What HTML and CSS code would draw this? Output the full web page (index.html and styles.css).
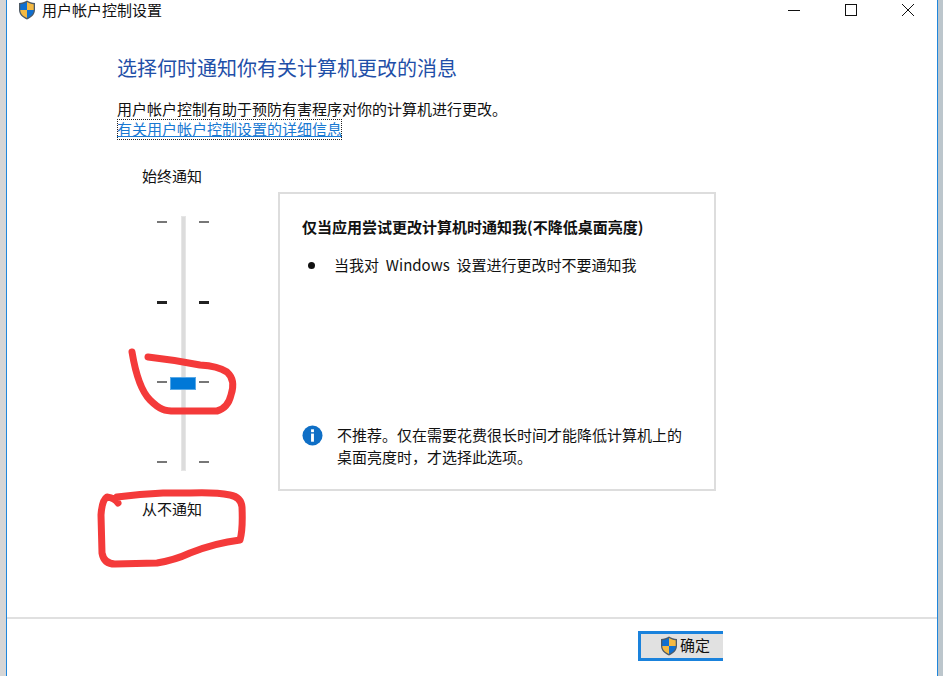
FILE: index.html
```html
<!DOCTYPE html>
<html lang="zh-CN">
<head>
<meta charset="utf-8">
<title>用户帐户控制设置</title>
<link rel="stylesheet" href="styles.css">
</head>
<body>
<div class="strip-left"></div>
<div class="window">
  <header class="titlebar">
    <svg class="shield" viewBox="0 0 18 20"><path d="M9 0.5 C6.5 2 4 2.8 1 3 V10 C1 14.5 4.5 17.5 9 19.5 C13.5 17.5 17 14.5 17 10 V3 C14 2.8 11.5 2 9 0.5Z" fill="#4d5a66"/><path d="M9 2 V10 H2.3 V4.2 C4.8 4 7 3.2 9 2Z" fill="#0f6fd0"/><path d="M9 2 C11 3.2 13.2 4 15.7 4.2 V10 H9Z" fill="#f4b942"/><path d="M2.3 10 H9 V18 C5 16.2 2.3 13.6 2.3 10Z" fill="#f4b942"/><path d="M9 10 H15.7 C15.7 13.6 13 16.2 9 18Z" fill="#0f6fd0"/></svg>
    <span class="title">用户帐户控制设置</span>
    <div class="controls">
      <svg class="ctl" viewBox="0 0 14 14"><path d="M1 7.5 H13" stroke="#111" fill="none"/></svg>
      <svg class="ctl" viewBox="0 0 14 14"><rect x="1.5" y="1.5" width="11" height="11" stroke="#111" fill="none"/></svg>
      <svg class="ctl" viewBox="0 0 14 14"><path d="M1 1 L13 13 M13 1 L1 13" stroke="#111" fill="none"/></svg>
    </div>
  </header>

  <main class="content">
    <h1 class="heading">选择何时通知你有关计算机更改的消息</h1>
    <p class="desc">用户帐户控制有助于预防有害程序对你的计算机进行更改。</p>
    <a class="link" href="#">有关用户帐户控制设置的详细信息</a>

    <div class="columns">
      <div class="slider-col">
        <div class="slider-label">始终通知</div>
        <div class="slider">
          <div class="ticks">
            <span class="tick"></span><span class="tick dark"></span><span class="tick"></span><span class="tick"></span>
          </div>
          <div class="track"><span class="thumb"></span></div>
          <div class="ticks">
            <span class="tick"></span><span class="tick dark"></span><span class="tick"></span><span class="tick"></span>
          </div>
        </div>
        <div class="slider-label bottom">从不通知</div>
      </div>

      <section class="panel">
        <h2 class="panel-title">仅当应用尝试更改计算机时通知我(不降低桌面亮度)</h2>
        <ul class="panel-list">
          <li><span class="item-text">当我对 Windows 设置进行更改时不要通知我</span></li>
        </ul>
        <div class="note">
          <svg class="info" viewBox="0 0 22 22"><circle cx="11" cy="11" r="10.5" fill="#0f6fc6"/><rect x="9.5" y="4.5" width="3" height="3" fill="#fff"/><rect x="9.5" y="9" width="3" height="8.5" fill="#fff"/></svg>
          <p>不推荐。仅在需要花费很长时间才能降低计算机上的桌面亮度时，才选择此选项。</p>
        </div>
      </section>
    </div>
  </main>

  <footer class="footer">
    <button class="ok" type="button">
      <svg class="shield small" viewBox="0 0 18 20"><path d="M9 0.5 C6.5 2 4 2.8 1 3 V10 C1 14.5 4.5 17.5 9 19.5 C13.5 17.5 17 14.5 17 10 V3 C14 2.8 11.5 2 9 0.5Z" fill="#4d5a66"/><path d="M9 2 V10 H2.3 V4.2 C4.8 4 7 3.2 9 2Z" fill="#0f6fd0"/><path d="M9 2 C11 3.2 13.2 4 15.7 4.2 V10 H9Z" fill="#f4b942"/><path d="M2.3 10 H9 V18 C5 16.2 2.3 13.6 2.3 10Z" fill="#f4b942"/><path d="M9 10 H15.7 C15.7 13.6 13 16.2 9 18Z" fill="#0f6fd0"/></svg>
      <span class="ok-text">确定</span>
    </button>
  </footer>
</div>
<div class="strip-right"></div>

<svg class="scribble" viewBox="0 0 943 676">
  <path d="M132 352 C135 370 140 390 150 400 S165 411 175 411 L217 411 Q228 408 231 395 Q236 380 227 372 Q218 366 200 365 Q175 360 148 357"/>
  <path d="M118 503 Q115 498 107 497 Q102 500 101 515 L102 553 Q104 564 115 564 L157 563 Q175 560 190 553 Q215 543 240 540 Q243 530 242 507 Q241 497 230 495 Q215 492 190 493 L163 493 Q140 494 117 497"/>
</svg>
</body>
</html>
```
FILE: styles.css
```css
* { box-sizing: border-box; }
html, body { height: 100%; }
body {
  margin: 0;
  display: flex;
  height: 676px;
  overflow: hidden;
  background: #fff;
  color: #111;
  font-family: "Noto Sans CJK SC", "Noto Sans", sans-serif;
  font-size: 15px;
}
.strip-left { width: 6px; background: #d6d6d6; }
.strip-right { width: 5px; background: #bcc6cc; }
.window {
  flex: 1;
  display: flex;
  flex-direction: column;
  background: #fff;
  border-left: 1px solid #1f86dc;
  border-right: 1px solid #1f86dc;
}
.titlebar {
  display: flex;
  align-items: center;
  height: 19px;
  padding-left: 11px;
}
.shield { width: 18px; height: 20px; flex: none; }
.title { margin-left: 6px; line-height: 19px; }
.controls {
  margin-left: auto;
  display: flex;
  gap: 43px;
  padding-right: 22px;
}
.ctl { width: 14px; height: 14px; display: block; }
.content { flex: 1; padding: 36px 0 0 110px; }
.heading {
  margin: 0;
  font-size: 20px;
  font-weight: 400;
  line-height: 26px;
  color: #1f4fa8;
}
.desc { margin: 17px 0 -2px; line-height: 22px; }
.link {
  display: inline-block;
  height: 21px;
  line-height: 20px;
  color: #1979d2;
  text-decoration: underline;
  outline: 1px dotted #222;
  outline-offset: -1px;
}
.columns { display: flex; margin-top: 26px; }
.slider-col {
  width: 131px;
  margin-right: 30px;
  display: flex;
  flex-direction: column;
  align-items: center;
}
.slider-label { line-height: 20px; margin-left: -21px; }
.slider-label.bottom { margin-top: 28px; }
.slider {
  display: flex;
  justify-content: center;
  gap: 13px;
  margin-top: 30px;
  height: 255px;
}
.ticks {
  width: 10px;
  display: flex;
  flex-direction: column;
  justify-content: space-between;
  padding: 5px 0 8px;
}
.tick { display: block; height: 2px; background: #777; }
.tick.dark { height: 3px; background: #222; }
.track {
  position: relative;
  width: 5px;
  margin-left: 1px;
  background: #dcdcdc;
  border: 1px solid #e6e6e6;
}
.thumb {
  position: absolute;
  left: -12px;
  top: 160px;
  width: 26px;
  height: 13px;
  background: #0078d7;
  border: 1px solid #5aa9e6;
}
.panel {
  width: 438px;
  height: 299px;
  margin-top: 26px;
  border: 2px solid #dddddd;
  padding: 22px 22px 0;
  display: flex;
  flex-direction: column;
}
.panel-title { margin: 0; font-size: 15px; font-weight: 700; line-height: 22px; white-space: nowrap; }
.panel-list {
  margin: 16px 0 0;
  padding: 0;
  line-height: 22px;
  list-style: none;
}
.panel-list li { display: flex; align-items: center; }
.panel-list li::before {
  content: "";
  width: 7px;
  height: 7px;
  margin: 0 19px 0 6px;
  border-radius: 50%;
  background: #111;
}
.item-text { word-spacing: 3.5px; }
.note { display: flex; gap: 14px; margin-top: 148px; }
.info { width: 21px; height: 21px; flex: none; margin-top: 1px; }
.note p { margin: 0; width: 350px; line-height: 22px; }
.footer {
  height: 59px;
  border-top: 2px solid #e0e0e0;
  padding: 12px 214px 0 0;
  display: flex;
  justify-content: flex-end;
}
.ok {
  display: flex;
  align-items: center;
  justify-content: flex-start;
  gap: 2px;
  width: 85px;
  height: 30px;
  padding: 0 0 0 19px;
  background: #e1e1e1;
  border: 3px solid #1a82dc;
  border-right: 0;
  color: #111;
  font: inherit;
}
.ok-text { margin-bottom: 3px; }
.shield.small { width: 18px; height: 20px; }
.scribble {
  position: absolute;
  left: 0;
  top: 0;
  width: 943px;
  height: 676px;
  pointer-events: none;
  fill: none;
  stroke: #f43a3a;
  stroke-width: 7;
  stroke-linecap: round;
  stroke-linejoin: round;
}
```
